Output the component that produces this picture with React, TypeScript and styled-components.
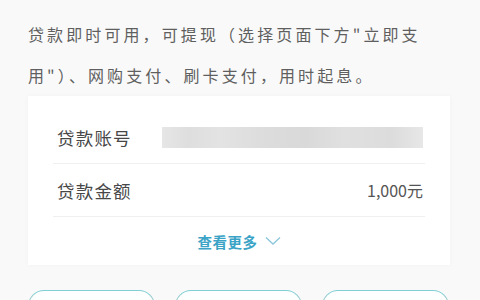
import React from "react";
import styled, { createGlobalStyle } from "styled-components";

const Global = createGlobalStyle`
  html, body { margin: 0; padding: 0; background: #f9f9f9; }
  body { font-family: "Noto Sans CJK SC", "Noto Sans", sans-serif; width: 480px; height: 300px; overflow: hidden; }
`;

const Page = styled.div`
  display: flex;
  flex-direction: column;
  padding: 14px 28px 0 28px;
`;

const Intro = styled.p`
  margin: 0;
  font-size: 16px;
  line-height: 41px;
  letter-spacing: 3.1px;
  color: #5f5f5f;
  width: 424px;
`;

const Card = styled.div`
  margin-top: 0;
  width: 422px;
  background: #ffffff;
  box-shadow: 0 0 6px rgba(0, 0, 0, 0.03);
  padding: 15px 25px 0 25px;
  box-sizing: border-box;
  display: flex;
  flex-direction: column;
`;

const Row = styled.div`
  display: flex;
  align-items: center;
  justify-content: space-between;
  height: 52px;
  border-bottom: 1px solid #efefef;
  padding: 0 2px 0 4px;
`;

const Label = styled.span`
  font-size: 17.5px;
  letter-spacing: 1.2px;
  color: #474747;
`;

const Value = styled.span`
  font-size: 16px;
  color: #555;
`;

const Masked = styled.div`
  width: 261px;
  height: 21px;
  background: linear-gradient(90deg, #e6e6e6 0%, #dedede 10%, #e3e3e3 22%, #dcdcdc 40%, #d9d9d9 55%, #e0e0e0 70%, #dcdcdc 88%, #e7e7e7 100%);
  filter: blur(0.6px);
`;

const More = styled.div`
  height: 48px;
  display: flex;
  align-items: center;
  justify-content: center;
  gap: 7px;
  font-size: 14.5px;
  font-weight: 600;
  letter-spacing: 0.5px;
  color: #3aa3c6;
`;

const Buttons = styled.div`
  margin-top: 25px;
  display: flex;
  gap: 20px;
`;

const Btn = styled.div`
  width: 127px;
  height: 38px;
  box-sizing: border-box;
  border: 1.5px solid #93c9cc;
  border-top-color: #7fcfd3;
  border-radius: 16px;
  display: flex;
  justify-content: center;
  padding-top: 7px;
  font-size: 16px;
  color: #e9b566;
  letter-spacing: 1px;
  background: #fdfefe;
`;

export default function App() {
  return (
    <>
      <Global />
      <Page>
        <Intro>
          贷款即时可用，可提现（选择页面下方"立即支用"）、网购支付、刷卡支付，用时起息。
        </Intro>
        <Card>
          <Row>
            <Label>贷款账号</Label>
            <Masked />
          </Row>
          <Row>
            <Label>贷款金额</Label>
            <Value>1,000元</Value>
          </Row>
          <More>
            查看更多
            <svg width="16" height="10" viewBox="0 0 16 10">
              <path d="M1 1.5 L8 8 L15 1.5" fill="none" stroke="#8cc6dc" strokeWidth="1.3" />
            </svg>
          </More>
        </Card>
        <Buttons>
          <Btn>立即支用</Btn>
          <Btn>提前还款</Btn>
          <Btn>还款计划</Btn>
        </Buttons>
      </Page>
    </>
  );
}
